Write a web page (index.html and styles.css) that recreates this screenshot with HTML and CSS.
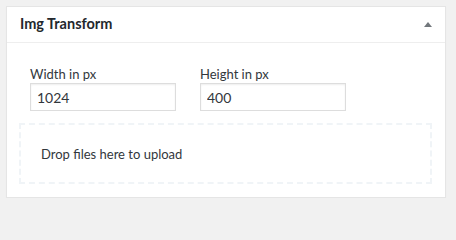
FILE: index.html
```html
<!DOCTYPE html>
<html>
<head>
<meta charset="utf-8">
<link rel="stylesheet" href="styles.css">
</head>
<body>
<div class="postbox">
  <div class="postbox-header">
    <h2 class="postbox-title">Img Transform</h2>
    <span class="toggle-arrow" aria-hidden="true"></span>
  </div>
  <div class="postbox-inside">
    <div class="fields">
      <label class="field">
        <span class="field-label">Width in px</span>
        <input class="field-input" type="text" value="1024">
      </label>
      <label class="field">
        <span class="field-label">Height in px</span>
        <input class="field-input" type="text" value="400">
      </label>
    </div>
    <div class="dropzone">Drop files here to upload</div>
  </div>
</div>
</body>
</html>
```
FILE: styles.css
```css
html, body {
  margin: 0;
  padding: 0;
  background: #f1f1f1;
}
body {
  font-family: "Lato", "Noto Sans", sans-serif;
  color: #23282d;
  padding: 6px 10px 0 6px;
}
.postbox {
  background: #fff;
  border: 1px solid #e5e5e5;
  box-shadow: 0 1px 1px rgba(0,0,0,0.04);
  height: 192px;
  box-sizing: border-box;
}
.postbox-header {
  display: flex;
  align-items: center;
  justify-content: space-between;
  height: 35px;
  border-bottom: 1px solid #eeeeee;
  padding: 0 13px 0 13px;
}
.postbox-title {
  margin: 0;
  font-size: 14.5px;
  font-weight: 700;
  color: #23282d;
  line-height: 1;
}
.toggle-arrow {
  width: 0;
  height: 0;
  border-left: 4px solid transparent;
  border-right: 4px solid transparent;
  border-bottom: 5px solid #72777c;
}
.postbox-inside {
  padding: 22px 13px 0 12px;
}
.fields {
  display: flex;
  gap: 24px;
  padding-left: 11px;
}
.field {
  display: flex;
  flex-direction: column;
}
.field-label {
  font-size: 13px;
  line-height: 18px;
  color: #32373c;
}
.field-input {
  margin: 0;
  width: 146px;
  height: 28px;
  box-sizing: border-box;
  border: 1px solid #dddddd;
  box-shadow: inset 0 1px 2px rgba(0,0,0,0.07);
  padding: 0 6px;
  font-family: inherit;
  font-size: 14px;
  color: #32373c;
  background: #fff;
}
.dropzone {
  margin-top: 12px;
  height: 61px;
  box-sizing: border-box;
  border: 2px dashed #f0f4f7;
  display: flex;
  align-items: center;
  padding-left: 20px;
  font-size: 13px;
  color: #32373c;
}
```
